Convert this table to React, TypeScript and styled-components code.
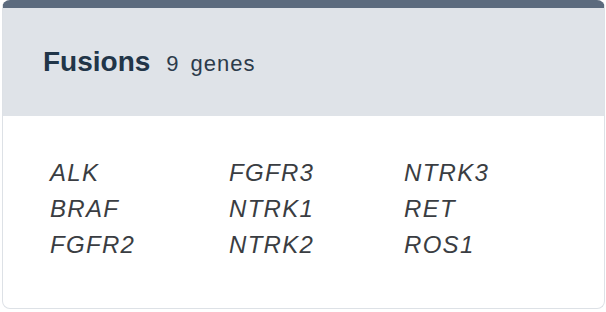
import React from "react"
import styled, { createGlobalStyle } from "styled-components"

const GlobalStyle = createGlobalStyle`
	html, body {
		margin: 0;
		padding: 0;
		background: #ffffff;
	}
	body {
		font-family: "Liberation Sans", Arial, sans-serif;
	}
`

const colors = {
	bar: "#5c6b7e",
	header: "#dfe3e8",
	border: "#dde1e6",
	title: "#213548",
	subtitle: "#2c3b4b",
	gene: "#3a3d42",
}

const CardElement = styled.section`
	box-sizing: border-box;
	width: 603px;
	margin: 0 0 0 2px;
	border: 1px solid ${colors.border};
	border-top: 8px solid ${colors.bar};
	border-radius: 8px;
	overflow: hidden;
	background: #ffffff;
`

const HeaderElement = styled.header`
	height: 108px;
	padding: 0 0 0 40px;
	display: flex;
	align-items: center;
	background: ${colors.header};
`

const TitleElement = styled.h2`
	margin: 0;
	display: flex;
	align-items: baseline;
	font-size: 28px;
	font-weight: 700;
	color: ${colors.title};
`

const CountElement = styled.span`
	margin-left: 16px;
	font-size: 22px;
	font-weight: 400;
	letter-spacing: 1px;
	color: ${colors.subtitle};
`

const UnitElement = styled.span`
	margin-left: 11px;
	font-size: 22px;
	font-weight: 400;
	letter-spacing: 1px;
	color: ${colors.subtitle};
`

const GeneGridElement = styled.ul`
	list-style: none;
	margin: 0;
	padding: 39px 0 45px 47px;
	display: grid;
	grid-template-rows: repeat(3, 36px);
	grid-template-columns: 179px 175px 1fr;
	grid-auto-flow: column;
`

const GeneElement = styled.li`
	font-size: 24px;
	line-height: 36px;
	font-style: italic;
	letter-spacing: 1.3px;
	color: ${colors.gene};
`

const GENES = ["ALK", "BRAF", "FGFR2", "FGFR3", "NTRK1", "NTRK2", "NTRK3", "RET", "ROS1"]

function App() {
	return (
		<>
			<GlobalStyle />
			<CardElement>
				<HeaderElement>
					<TitleElement>
						Fusions
						<CountElement>{GENES.length}</CountElement>
						<UnitElement>genes</UnitElement>
					</TitleElement>
				</HeaderElement>

				<GeneGridElement>
					{GENES.map(gene => <GeneElement key={gene}>{gene}</GeneElement>)}
				</GeneGridElement>
			</CardElement>
		</>
	)
}

export default App
